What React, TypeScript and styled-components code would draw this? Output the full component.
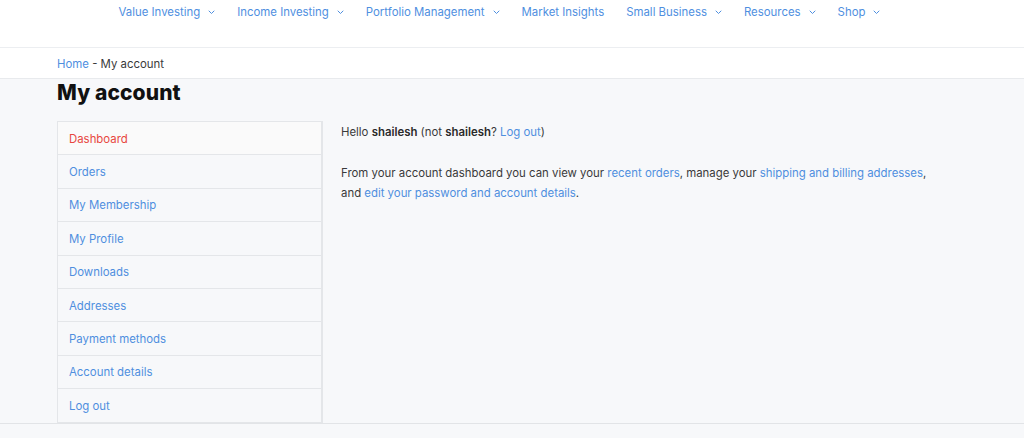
import React from "react";
import styled, { createGlobalStyle } from "styled-components";

const Global = createGlobalStyle`
  html, body { margin: 0; padding: 0; }
  body {
    background: #f7f8fa;
    font-family: Inter, "Noto Sans", sans-serif;
    font-size: 11.4px;
    color: #3a3a3a;
    -webkit-font-smoothing: antialiased;
  }
  a { text-decoration: none; }
`;

const Header = styled.header`
  background: #fff;
  height: 47px;
  border-bottom: 1px solid #eceef1;
  display: flex;
  justify-content: center;
`;

const Nav = styled.nav`
  display: flex;
  gap: 22px;
  padding-top: 4px;
  height: 16px;
  margin-left: -25px;
`;

const NavItem = styled.a`
  display: flex;
  align-items: center;
  gap: 8px;
  color: #4f8fdf;
  font-size: 11.4px;
  line-height: 16px;
  cursor: pointer;
`;

const Chevron = () => (
  <svg width="7" height="5" viewBox="0 0 7 5" fill="none">
    <path d="M1 1l2.5 2.5L6 1" stroke="#4f8fdf" strokeWidth="1" strokeLinecap="round" strokeLinejoin="round" />
  </svg>
);

const CrumbBar = styled.div`
  background: #fff;
  height: 30px;
  border-bottom: 1px solid #e8eaed;
  display: flex;
  align-items: center;
`;

const Container = styled.div`
  width: 910px;
  margin-left: 57px;
`;

const Crumbs = styled.div`
  font-size: 11.4px;
  color: #3a3a3a;
  line-height: 16px;
  margin-top: 1px;
`;

const CrumbLink = styled.a`
  color: #4f8fdf;
`;

const Main = styled.main`
  border-bottom: 1px solid #e2e4e7;
`;

const Title = styled.h1`
  font-family: Inter, "Noto Sans", sans-serif;
  font-weight: 800;
  font-size: 21px;
  line-height: 26px;
  color: #111;
  margin: 0;
  padding-top: 1px;
  letter-spacing: 0.1px;
`;

const Columns = styled.div`
  display: flex;
  gap: 18px;
  margin-top: 15px;
`;

const Sidebar = styled.ul`
  list-style: none;
  margin: 0;
  padding: 0;
  width: 263px;
  border: 1px solid #e4e6e9;
  border-right: 2px solid #e4e6e9;
  border-bottom: none;
`;

const SideItem = styled.li<{ $active?: boolean }>`
  border-bottom: 1px solid #e4e6e9;
  height: 32.4px;
  display: flex;
  align-items: center;
  padding-left: 11px;
  background: ${(p) => (p.$active ? "#fafafa" : "transparent")};
`;

const SideLink = styled.a<{ $active?: boolean }>`
  color: ${(p) => (p.$active ? "#e8483f" : "#4f8fdf")};
  font-size: 11.4px;
  line-height: 16px;
  margin-top: 1px;
`;

const Content = styled.div`
  padding-top: 1px;
  width: 600px;
`;

const Para = styled.p<{ $gap?: number }>`
  margin: 0;
  margin-top: ${(p) => p.$gap ?? 0}px;
  line-height: 20.5px;
  color: #3a3a3a;
`;

const Strong = styled.b`
  font-weight: 600;
  color: #2a2a2a;
`;

const Link = styled.a`
  color: #4f8fdf;
`;

const Footer = styled.div`
  height: 16px;
`;

const navItems: [string, boolean][] = [
  ["Value Investing", true],
  ["Income Investing", true],
  ["Portfolio Management", true],
  ["Market Insights", false],
  ["Small Business", true],
  ["Resources", true],
  ["Shop", true],
];

const sideItems = [
  "Dashboard",
  "Orders",
  "My Membership",
  "My Profile",
  "Downloads",
  "Addresses",
  "Payment methods",
  "Account details",
  "Log out",
];

export default function App() {
  return (
    <>
      <Global />
      <Header>
        <Nav>
          {navItems.map(([label, dd]) => (
            <NavItem key={label}>
              {label}
              {dd && <Chevron />}
            </NavItem>
          ))}
        </Nav>
      </Header>
      <CrumbBar>
        <Container>
          <Crumbs>
            <CrumbLink>Home</CrumbLink> - My account
          </Crumbs>
        </Container>
      </CrumbBar>
      <Main>
        <Container>
          <Title>My account</Title>
          <Columns>
            <Sidebar>
              {sideItems.map((s, i) => (
                <SideItem key={s} $active={i === 0}>
                  <SideLink $active={i === 0}>{s}</SideLink>
                </SideItem>
              ))}
            </Sidebar>
            <Content>
              <Para>
                Hello <Strong>shailesh</Strong> (not <Strong>shailesh</Strong>? <Link>Log out</Link>)
              </Para>
              <Para $gap={20}>
                From your account dashboard you can view your <Link>recent orders</Link>, manage your{" "}
                <Link>shipping and billing addresses</Link>, and <Link>edit your password and account details</Link>.
              </Para>
            </Content>
          </Columns>
        </Container>
      </Main>
      <Footer />
    </>
  );
}
